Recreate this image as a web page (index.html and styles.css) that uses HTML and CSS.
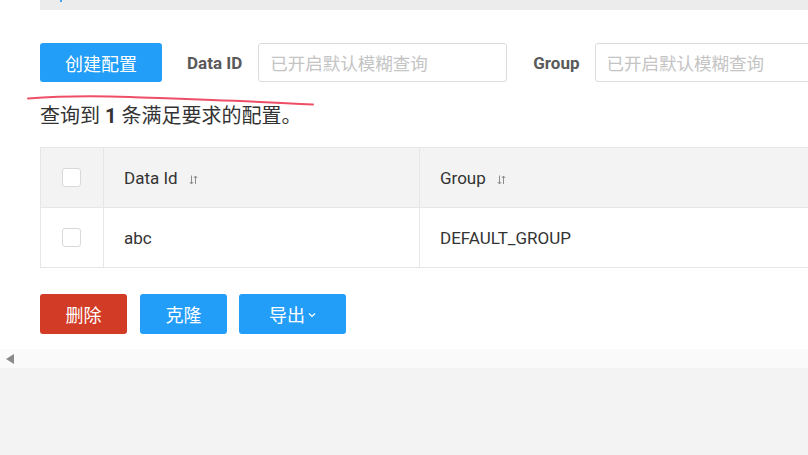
FILE: index.html
```html
<!DOCTYPE html>
<html lang="zh">
<head>
<meta charset="utf-8">
<link rel="stylesheet" href="styles.css">
</head>
<body>
<div class="page">
  <div class="topbar"><span class="topbar-mark"></span></div>
  <div class="toolbar">
    <button class="btn btn-primary btn-create">创建配置</button>
    <label class="field-label label-dataid">Data ID</label>
    <div class="input">已开启默认模糊查询</div>
    <label class="field-label label-group">Group</label>
    <div class="input">已开启默认模糊查询</div>
  </div>
  <p class="summary">查询到 <b>1</b> 条满足要求的配置。</p>
  <div class="table">
    <div class="cell head check-cell"><span class="checkbox"></span></div>
    <div class="cell head">Data Id <svg class="sort" width="9" height="10" viewBox="0 0 9 10"><path d="M2.5 0.5V9M0.8 7L2.5 9L4.2 7M6.5 9V1M4.8 3L6.5 1L8.2 3" fill="none" stroke="#8c8c8c" stroke-width="1"/></svg></div>
    <div class="cell head">Group <svg class="sort" width="9" height="10" viewBox="0 0 9 10"><path d="M2.5 0.5V9M0.8 7L2.5 9L4.2 7M6.5 9V1M4.8 3L6.5 1L8.2 3" fill="none" stroke="#8c8c8c" stroke-width="1"/></svg></div>
    <div class="cell check-cell"><span class="checkbox"></span></div>
    <div class="cell">abc</div>
    <div class="cell">DEFAULT_GROUP</div>
  </div>
  <div class="actions">
    <button class="btn btn-danger btn-sm">删除</button>
    <button class="btn btn-primary btn-sm">克隆</button>
    <button class="btn btn-primary btn-export">导出<svg class="chev" width="8" height="6" viewBox="0 0 8 6"><path d="M1 1.5L4 4.5L7 1.5" fill="none" stroke="#fff" stroke-width="1.2"/></svg></button>
  </div>
</div>
<div class="hscroll"><span class="arrow-left"></span></div>
<div class="footer-bg"></div>
<svg class="annotation" width="330" height="20" viewBox="0 0 330 20"><path d="M28 8.5 C 60 6, 90 5.5, 130 7 S 250 11, 313 14.5" fill="none" stroke="#ef4f66" stroke-width="2" stroke-linecap="round"/></svg>
</body>
</html>
```

FILE: styles.css
```css
* { box-sizing: border-box; }
html, body {
  margin: 0;
  padding: 0;
  width: 808px;
  height: 455px;
  overflow: hidden;
  background: #fff;
  font-family: Roboto, "Noto Sans CJK SC", sans-serif;
  color: #333;
}
.page {
  padding-left: 40px;
  width: 1100px;
}
.topbar {
  height: 10px;
  background: #ececec;
  position: relative;
}
.topbar-mark {
  position: absolute;
  left: 20px;
  top: 0;
  width: 2px;
  height: 2px;
  background: #4a9ff0;
}
.toolbar {
  margin-top: 33px;
  display: flex;
  align-items: center;
  height: 39px;
}
.btn {
  border: none;
  border-radius: 3px;
  color: #fff;
  font-family: "Noto Sans CJK SC", Roboto, sans-serif;
  font-size: 18px;
  padding: 0;
  display: flex;
  align-items: center;
  justify-content: center;
}
.btn-primary { background: #229df8; }
.btn-danger { background: #d23b25; }
.btn-create {
  width: 122px;
  height: 39px;
}
.field-label {
  font-weight: 700;
  font-size: 17px;
  color: #5a5a5a;
}
.label-dataid { margin-left: 25px; margin-right: 16px; }
.label-group { margin-left: 26px; margin-right: 15px; }
.input {
  width: 249px;
  height: 39px;
  border: 1px solid #dcdcdc;
  border-radius: 3px;
  padding-left: 11px;
  display: flex;
  align-items: center;
  font-family: "Noto Sans CJK SC", sans-serif;
  font-size: 17.5px;
  color: #c4c4c4;
}
.summary {
  margin: 21px 0 0;
  height: 44px;
  font-family: Roboto, "Noto Sans CJK SC", sans-serif;
  font-size: 20px;
  line-height: 26px;
  color: #333;
}
.summary b { font-weight: 700; }
.table {
  display: grid;
  grid-template-columns: 63px 316px 500px;
  border-top: 1px solid #e6e6e6;
  border-left: 1px solid #e6e6e6;
}
.cell {
  height: 60px;
  border-right: 1px solid #e6e6e6;
  border-bottom: 1px solid #e6e6e6;
  display: flex;
  align-items: center;
  padding-left: 20px;
  font-size: 17px;
  color: #333;
}
.cell.head { background: #f3f3f3; }
.check-cell {
  padding-left: 21px;
}
.checkbox {
  width: 19px;
  height: 19px;
  border: 1px solid #d9d9d9;
  border-radius: 3px;
  background: #fff;
}
.sort { margin-left: 11px; margin-top: 4px; }
.actions {
  display: flex;
  margin-top: 26px;
  height: 40px;
}
.btn-sm { width: 87px; height: 40px; margin-right: 13px; }
.btn-sm + .btn-sm { margin-right: 12px; }
.btn-export { width: 107px; height: 40px; }
.chev { margin-left: 3px; margin-top: 1px; }
.hscroll {
  margin-top: 15px;
  height: 19px;
  background: #fafafa;
  display: flex;
  align-items: center;
  padding-left: 6px;
}
.arrow-left {
  width: 0;
  height: 0;
  border-top: 5px solid transparent;
  border-bottom: 5px solid transparent;
  border-right: 8px solid #8a8a8a;
}
.footer-bg {
  height: 100px;
  background: #f3f3f3;
}
.annotation {
  position: absolute;
  left: 0;
  top: 90px;
}
```
